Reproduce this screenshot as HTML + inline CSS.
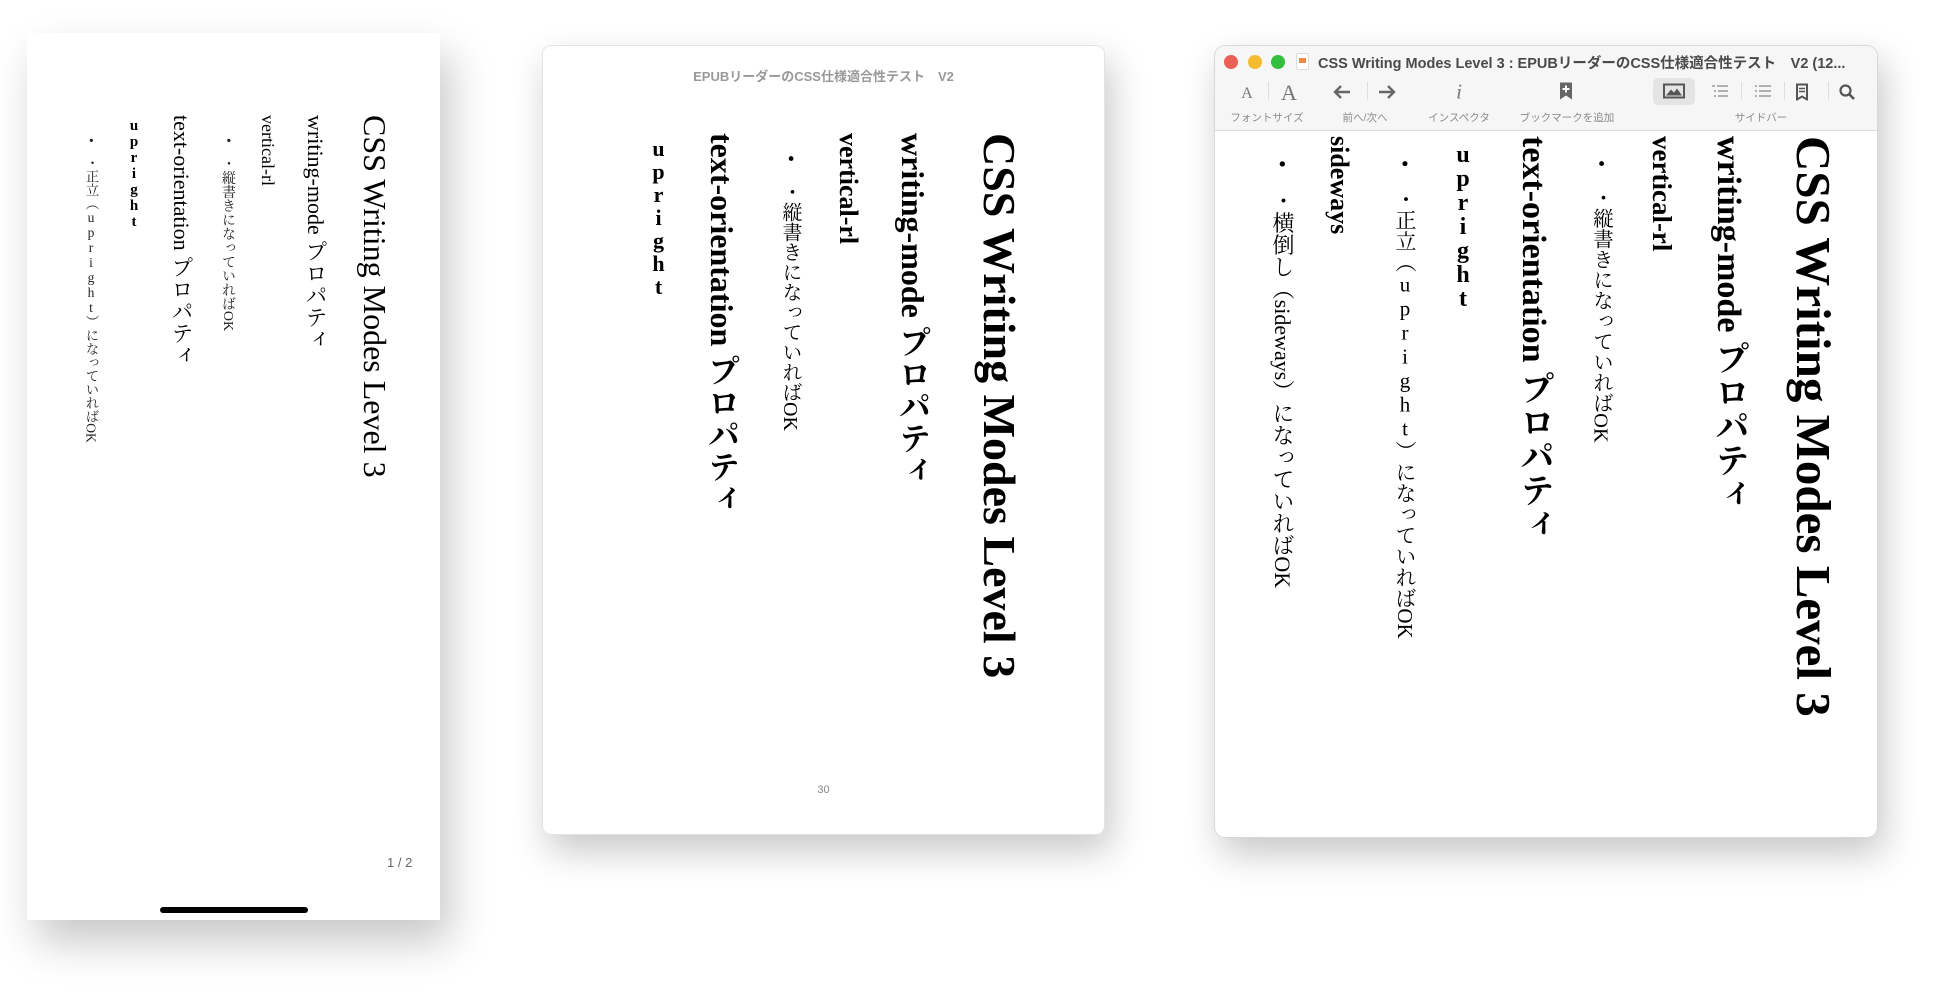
<!DOCTYPE html>
<html><head><meta charset="utf-8"><style>
html,body{margin:0;padding:0;background:#fff;width:1945px;height:1000px;overflow:hidden}
.a{position:absolute}
.v{position:absolute;writing-mode:vertical-rl;white-space:nowrap;font-family:"Liberation Serif","Noto Serif CJK JP",serif;color:#000;line-height:1}
.b{font-weight:bold}
.u{text-orientation:upright}
.lab{position:absolute;top:110px;font-family:"Liberation Sans","Noto Sans CJK JP",sans-serif;font-size:10.5px;color:#8a8a8a;transform:translateX(-50%);white-space:nowrap}
.ic{position:absolute;transform:translate(-50%,-50%)}
.sep{position:absolute;top:82px;width:1px;height:18px;background:#ddd}
</style></head><body>

<!-- phone -->
<div class="a" style="left:27px;top:33px;width:413px;height:887px;background:#fff;box-shadow:10px 22px 40px rgba(0,0,0,0.22)"></div>
<div class="v" style="left:359px;top:115px;font-size:32px">CSS Writing Modes Level 3</div>
<div class="v" style="left:304px;top:115px;font-size:22px">writing-mode プロパティ</div>
<div class="v" style="left:259px;top:115px;font-size:18px">vertical-rl</div>
<div class="v" style="left:220px;top:138px;font-size:14px;color:#222">•　・縦書きになっていればOK</div>
<div class="v" style="left:170px;top:115px;font-size:22px">text-orientation プロパティ</div>
<div class="v b u" style="left:126px;top:118px;font-size:15px">upright</div>
<div class="v" style="left:84px;top:138px;font-size:13.5px;color:#222">•　・正立（<span class="u">upright</span>）になっていればOK</div>
<div class="a" style="left:387px;top:855px;font-family:'Liberation Sans',sans-serif;font-size:13px;color:#666">1 / 2</div>
<div class="a" style="left:160px;top:907px;width:148px;height:6px;border-radius:3px;background:#000"></div>

<!-- middle -->
<div class="a" style="left:542px;top:45px;width:563px;height:790px;background:#fff;border-radius:9px;border:1px solid #e4e4e4;box-sizing:border-box;box-shadow:6px 16px 36px rgba(0,0,0,0.22)"></div>
<div class="a" style="left:542px;width:563px;top:66px;text-align:center;font-family:'Liberation Sans','Noto Sans CJK JP',sans-serif;font-size:13px;font-weight:bold;color:#999">EPUBリーダーのCSS仕様適合性テスト　V2</div>
<div class="v b" style="left:976px;top:133px;font-size:46px">CSS Writing Modes Level 3</div>
<div class="v b" style="left:897px;top:133px;font-size:32px">writing-mode プロパティ</div>
<div class="v b" style="left:835px;top:133px;font-size:26px">vertical-rl</div>
<div class="v" style="left:780px;top:155px;font-size:20px">•　・縦書きになっていればOK</div>
<div class="v b" style="left:706px;top:133px;font-size:32px">text-orientation プロパティ</div>
<div class="v b u" style="left:647px;top:136px;font-size:22px;letter-spacing:-2px">upright</div>
<div class="a" style="left:542px;width:563px;top:784px;text-align:center;font-family:'Liberation Sans',sans-serif;font-size:11px;color:#888">30</div>

<!-- right window -->
<div class="a" style="left:1214px;top:45px;width:664px;height:793px;background:#fff;border-radius:11px;border:1px solid #d8d8d8;box-sizing:border-box;box-shadow:6px 16px 36px rgba(0,0,0,0.22);overflow:hidden">
  <div style="position:absolute;left:0;top:0;width:100%;height:84px;background:#f6f6f6;border-bottom:1px solid #dcdcdc"></div>
</div>
<div class="a" style="left:1224px;top:55px;width:14px;height:14px;border-radius:50%;background:#ec5f57"></div>
<div class="a" style="left:1248px;top:55px;width:14px;height:14px;border-radius:50%;background:#f4bb2f"></div>
<div class="a" style="left:1271px;top:55px;width:14px;height:14px;border-radius:50%;background:#33c03f"></div>
<div class="a" style="left:1296px;top:53px;width:11px;height:15px;background:#fff;border:1px solid #ddd;border-radius:2px"><div style="margin:4px 2px;width:7px;height:5px;background:#e98a45"></div></div>
<div class="a" style="left:1318px;top:52px;font-family:'Liberation Sans','Noto Sans CJK JP',sans-serif;font-size:14.5px;font-weight:bold;color:#4a4a4a;white-space:nowrap">CSS Writing Modes Level 3 : EPUBリーダーのCSS仕様適合性テスト　V2 (12...</div>

<div class="ic" style="left:1247px;top:94px;font-family:'Liberation Serif',serif;font-size:16px;color:#777">A</div>
<div class="sep" style="left:1268px"></div>
<div class="ic" style="left:1289px;top:93px;font-family:'Liberation Serif',serif;font-size:22px;color:#777">A</div>
<svg class="ic" style="left:1342px;top:92px" width="20" height="16" viewBox="0 0 20 16"><path d="M18 8H3M9 2L3 8l6 6" stroke="#666" stroke-width="2.4" fill="none"/></svg>
<div class="sep" style="left:1367px"></div>
<svg class="ic" style="left:1387px;top:92px" width="20" height="16" viewBox="0 0 20 16"><path d="M2 8h15M11 2l6 6-6 6" stroke="#666" stroke-width="2.4" fill="none"/></svg>
<div class="ic" style="left:1459px;top:92px;font-family:'Liberation Serif',serif;font-style:italic;font-size:21px;color:#777">i</div>
<svg class="ic" style="left:1566px;top:91px" width="12" height="17" viewBox="0 0 12 17"><path d="M0 0h12v17l-6-4-6 4z" fill="#666"/><path d="M6 3v7M2.5 6.5h7" stroke="#fff" stroke-width="2"/></svg>
<div class="a" style="left:1653px;top:78px;width:42px;height:27px;border-radius:5px;background:#e4e4e4"></div>
<svg class="ic" style="left:1674px;top:91px" width="22" height="15" viewBox="0 0 22 15"><rect x="1" y="1" width="20" height="13" fill="none" stroke="#555" stroke-width="2"/><path d="M3 12l5-6 3 3 3-4 5 7z" fill="#555"/></svg>
<svg class="ic" style="left:1720px;top:91px" width="16" height="12" viewBox="0 0 16 12"><path d="M0 1h3M5 1h11M2 6h2M6 6h10M2 11h2M6 11h10" stroke="#888" stroke-width="1.3"/></svg>
<div class="sep" style="left:1741px"></div>
<svg class="ic" style="left:1763px;top:91px" width="16" height="12" viewBox="0 0 16 12"><path d="M0 1h2M4 1h12M0 6h2M4 6h12M0 11h2M4 11h12" stroke="#888" stroke-width="1.3"/></svg>
<div class="sep" style="left:1784px"></div>
<svg class="ic" style="left:1802px;top:92px" width="12" height="17" viewBox="0 0 12 17"><path d="M1 1h10v15l-5-3-5 3z" fill="none" stroke="#555" stroke-width="2"/><path d="M3 5h6M3 8h6" stroke="#555" stroke-width="1.5"/></svg>
<div class="sep" style="left:1828px"></div>
<svg class="ic" style="left:1847px;top:92px" width="16" height="16" viewBox="0 0 16 16"><circle cx="6.5" cy="6.5" r="5" fill="none" stroke="#555" stroke-width="2.2"/><path d="M10 10l5 5" stroke="#555" stroke-width="2.6"/></svg>
<div class="lab" style="left:1267px">フォントサイズ</div>
<div class="lab" style="left:1365px">前へ/次へ</div>
<div class="lab" style="left:1459px">インスペクタ</div>
<div class="lab" style="left:1567px">ブックマークを追加</div>
<div class="lab" style="left:1761px">サイドバー</div>

<div class="v b" style="left:1789px;top:136px;font-size:49px">CSS Writing Modes Level 3</div>
<div class="v b" style="left:1711px;top:136px;font-size:34px">writing-mode プロパティ</div>
<div class="v b" style="left:1648px;top:136px;font-size:27px">vertical-rl</div>
<div class="v" style="left:1590px;top:160px;font-size:20.5px">•　・縦書きになっていればOK</div>
<div class="v b" style="left:1516px;top:136px;font-size:34px">text-orientation プロパティ</div>
<div class="v b u" style="left:1451px;top:142px;font-size:24px;letter-spacing:-2px">upright</div>
<div class="v" style="left:1394px;top:160px;font-size:21px">•　・正立（<span class="u">upright</span>）になっていればOK</div>
<div class="v b" style="left:1326px;top:136px;font-size:26px">sideways</div>
<div class="v" style="left:1271px;top:160px;font-size:22px">•　・横倒し（sideways）になっていればOK</div>
</body></html>
